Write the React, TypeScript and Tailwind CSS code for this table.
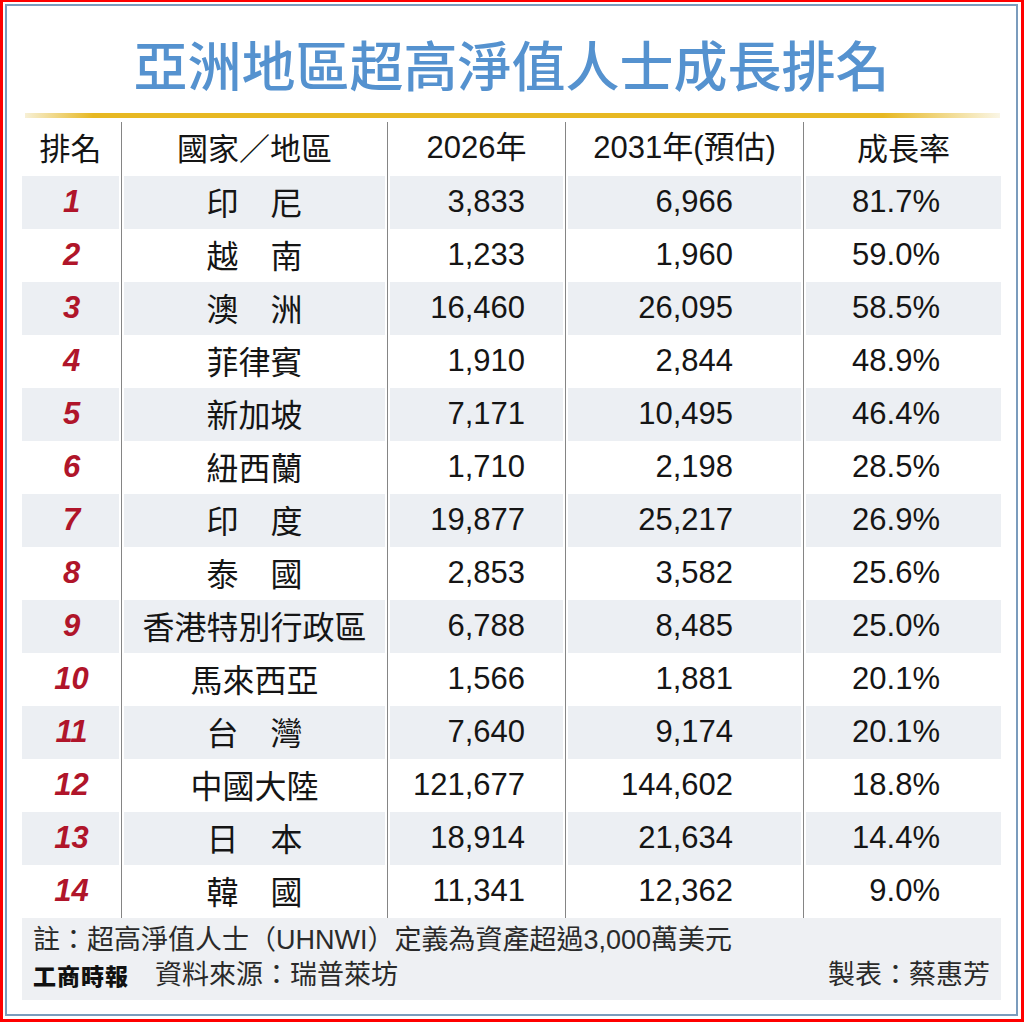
import React from "react";

type Row = { rank: number; name: string; y2026: string; y2031: string; growth: string };

const rows: Row[] = [
  { rank: 1, name: "印　尼", y2026: "3,833", y2031: "6,966", growth: "81.7%" },
  { rank: 2, name: "越　南", y2026: "1,233", y2031: "1,960", growth: "59.0%" },
  { rank: 3, name: "澳　洲", y2026: "16,460", y2031: "26,095", growth: "58.5%" },
  { rank: 4, name: "菲律賓", y2026: "1,910", y2031: "2,844", growth: "48.9%" },
  { rank: 5, name: "新加坡", y2026: "7,171", y2031: "10,495", growth: "46.4%" },
  { rank: 6, name: "紐西蘭", y2026: "1,710", y2031: "2,198", growth: "28.5%" },
  { rank: 7, name: "印　度", y2026: "19,877", y2031: "25,217", growth: "26.9%" },
  { rank: 8, name: "泰　國", y2026: "2,853", y2031: "3,582", growth: "25.6%" },
  { rank: 9, name: "香港特別行政區", y2026: "6,788", y2031: "8,485", growth: "25.0%" },
  { rank: 10, name: "馬來西亞", y2026: "1,566", y2031: "1,881", growth: "20.1%" },
  { rank: 11, name: "台　灣", y2026: "7,640", y2031: "9,174", growth: "20.1%" },
  { rank: 12, name: "中國大陸", y2026: "121,677", y2031: "144,602", growth: "18.8%" },
  { rank: 13, name: "日　本", y2026: "18,914", y2031: "21,634", growth: "14.4%" },
  { rank: 14, name: "韓　國", y2026: "11,341", y2031: "12,362", growth: "9.0%" },
];

// divider: white gap with a thin gray line in the middle
const Divider = () => (
  <div className="flex w-[5px] shrink-0 justify-center self-stretch bg-white">
    <div className="w-px bg-[#858585]" />
  </div>
);

const App = () => {
  return (
    <div className="h-[1022px] w-[1024px] border-t-2 border-r-[3px] border-b-[3px] border-l-[3px] border-[#ff0000] bg-white pt-[2px] pr-[3px] pb-[3px] pl-[2px] font-['Liberation_Sans','Noto_Sans_CJK_TC',sans-serif] text-[#151515]">
      <div className="h-full border-2 border-[#7b9cbd] bg-white px-[15px] pt-[31px]">
        {/* title */}
        <h1 className="text-center font-['Noto_Sans_CJK_TC',sans-serif] text-[54px] leading-[54px] font-medium text-[#5592cf]">
          亞洲地區超高淨值人士成長排名
        </h1>

        {/* gold rule */}
        <div className="mt-[22px] ml-[3px] h-[5px] w-[975px] bg-[linear-gradient(to_right,#f7f0d6_0%,#e7b822_7%,#e7b822_88%,#faf6e6_100%)]" />

        {/* header */}
        <div className="mt-[4px] flex h-[54px] text-[31px]">
          <div className="flex w-[97px] items-center justify-center pb-[4px] font-['Noto_Sans_CJK_TC',sans-serif]">排名</div>
          <Divider />
          <div className="flex w-[261px] items-center justify-center pb-[4px] font-['Noto_Sans_CJK_TC',sans-serif]">國家／地區</div>
          <Divider />
          <div className="flex w-[173px] items-center justify-center pb-[2px]">2026年</div>
          <Divider />
          <div className="flex w-[233px] items-center justify-center pb-[2px]">2031年(預估)</div>
          <Divider />
          <div className="flex w-[195px] items-center justify-center pb-[4px] font-['Noto_Sans_CJK_TC',sans-serif]">成長率</div>
        </div>

        {/* body */}
        {rows.map((r) => {
          const bg = r.rank % 2 === 1 ? "bg-[#eceff3]" : "bg-white";
          return (
            <div key={r.rank} className="flex h-[53px] text-[31px]">
              <div className={`flex w-[97px] items-center justify-center ${bg} pl-[2px] text-[31px] font-bold italic text-[#b0152a]`}>
                {r.rank}
              </div>
              <Divider />
              <div className={`flex w-[261px] items-center justify-center ${bg} pb-[4px] font-['Noto_Sans_CJK_TC',sans-serif] text-[32px]`}>
                {r.name}
              </div>
              <Divider />
              <div className={`flex w-[173px] items-center justify-end pr-[38px] ${bg}`}>{r.y2026}</div>
              <Divider />
              <div className={`flex w-[233px] items-center justify-end pr-[68px] ${bg}`}>{r.y2031}</div>
              <Divider />
              <div className={`flex w-[195px] items-center justify-end pr-[61px] ${bg}`}>{r.growth}</div>
            </div>
          );
        })}

        {/* footer */}
        <div className="h-[82px] bg-[#eef0f3] px-[11px] pt-[5px] text-[27px] leading-[35px] text-[#2a2a2a]">
          <div>註：超高淨值人士（UHNWI）定義為資產超過3,000萬美元</div>
          <div className="flex items-center">
            <span className="mr-[26px] font-['Noto_Sans_CJK_TC',serif] text-[23px] font-black tracking-[1px] text-[#111]">
              工商時報
            </span>
            <span>資料來源：瑞普萊坊</span>
            <span className="ml-auto">製表：蔡惠芳</span>
          </div>
        </div>
      </div>
    </div>
  );
};

export default App;
